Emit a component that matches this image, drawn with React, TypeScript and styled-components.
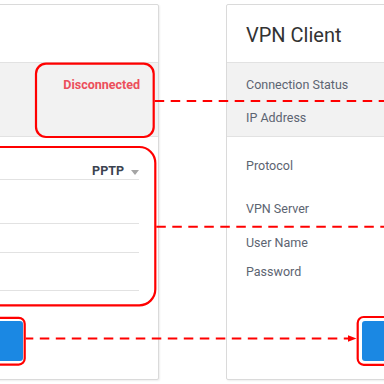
import styled, { createGlobalStyle } from 'styled-components';

const GlobalStyle = createGlobalStyle`
  html, body {
    margin: 0;
    padding: 0;
    background: #ffffff;
  }
  body {
    font-family: Roboto, 'Liberation Sans', sans-serif;
    overflow: hidden;
  }
`;

const App = () => {
  return (
    <>
      <GlobalStyle />
      <Stage>
        {/* mobile-ish card, mostly cut off on the left */}
        <Card $width={230} $offset={-71}>
          <CardHeader />
          <StatusSection>
            <StatusRow $align="flex-end">
              <StatusValue>Disconnected</StatusValue>
            </StatusRow>
            <StatusRow />
          </StatusSection>
          <FormSection>
            <Field $h={29}>
              <Select>
                PPTP
                <Caret />
              </Select>
            </Field>
            <Field $h={44} />
            <Field $h={29} />
            <Field $h={38} />
          </FormSection>
          <Footer $justify="flex-start">
            <Button $w={74} />
          </Footer>
        </Card>

        <Card $width={236}>
          <CardHeader>VPN Client</CardHeader>
          <StatusSection>
            <StatusRow>
              <Label>Connection Status</Label>
            </StatusRow>
            <StatusRow>
              <Label>IP Address</Label>
            </StatusRow>
          </StatusSection>
          <LabelList>
            <LabelRow $top={21}>Protocol</LabelRow>
            <LabelRow $top={27}>VPN Server</LabelRow>
            <LabelRow $top={18}>User Name</LabelRow>
            <LabelRow $top={13}>Password</LabelRow>
          </LabelList>
          <Footer $justify="flex-end">
            <Button $w={80} />
          </Footer>
        </Card>

        <Annotations viewBox="0 0 384 384" width={384} height={384}>
          <rect x={36} y={63.7} width={117.7} height={73.3} rx={10} />
          <rect x={-40} y={147} width={195.3} height={158.3} rx={16} />
          <rect x={-40} y={317.8} width={64.7} height={46.8} rx={6} />
          <rect x={357.7} y={317} width={60} height={47.8} rx={6} />
          <line x1={154.7} y1={101} x2={390} y2={101} />
          <line x1={156.3} y1={226.7} x2={390} y2={226.7} />
          <line
            x1={25.7}
            y1={338.5}
            x2={349}
            y2={338.5}
            strokeDashoffset={1.9}
          />
          <polygon points="348,335.2 356.5,338.5 348,341.8" />
        </Annotations>
      </Stage>
    </>
  );
};

export default App;

const Stage = styled.div`
  position: relative;
  width: 384px;
  height: 384px;
  overflow: hidden;
  box-sizing: border-box;
  padding-top: 4px;
  display: flex;
  align-items: flex-start;
  gap: 67px;
`;

const Card = styled.section<{ $width: number; $offset?: number }>`
  flex-shrink: 0;
  width: ${(props) => props.$width}px;
  margin-left: ${(props) => props.$offset ?? 0}px;
  height: 376px;
  box-sizing: border-box;
  border: 1px solid #dadada;
  border-radius: 2px;
  background: #ffffff;
  box-shadow: 1px 1px 2px rgba(0, 0, 0, 0.07);
  display: flex;
  flex-direction: column;
`;

const CardHeader = styled.div`
  height: 57px;
  box-sizing: border-box;
  padding: 3px 19px 0;
  display: flex;
  align-items: center;
  font-size: 20px;
  color: #333333;
`;

const StatusSection = styled.div`
  height: 75px;
  box-sizing: border-box;
  border-top: 1px solid #e2e2e2;
  border-bottom: 1px solid #e2e2e2;
  background: #f2f2f2;
  padding: 5px 19px 0;
`;

const StatusRow = styled.div<{ $align?: string }>`
  height: 33px;
  display: flex;
  align-items: center;
  justify-content: ${(props) => props.$align ?? 'flex-start'};
`;

const Label = styled.span`
  font-size: 12.5px;
  color: #5c6471;
`;

const StatusValue = styled.span`
  font-size: 12.5px;
  font-weight: 700;
  color: #ec4f5b;
  margin-right: -1px;
`;

const FormSection = styled.div`
  padding: 14px 19px 0;
  display: flex;
  flex-direction: column;
`;

const Field = styled.div<{ $h: number }>`
  height: ${(props) => props.$h}px;
  box-sizing: border-box;
  border-bottom: 1px solid #e2e2e2;
  display: flex;
  align-items: flex-end;
  justify-content: flex-end;
  padding-bottom: 1px;
`;

const Select = styled.div`
  display: flex;
  align-items: center;
  gap: 7px;
  font-size: 12.5px;
  line-height: 14px;
  font-weight: 700;
  color: #3b4350;
`;

const Caret = styled.span`
  width: 0;
  height: 0;
  border-left: 4.5px solid transparent;
  border-right: 4.5px solid transparent;
  border-top: 5px solid #a5a5a5;
  margin-top: 2px;
`;

const LabelList = styled.div`
  padding: 0 19px;
  display: flex;
  flex-direction: column;
`;

const LabelRow = styled.div<{ $top: number }>`
  margin-top: ${(props) => props.$top}px;
  line-height: 16px;
  font-size: 12.5px;
  color: #5c6471;
`;

const Footer = styled.div<{ $justify: string }>`
  margin-top: auto;
  padding: 0 19px 18px;
  display: flex;
  justify-content: ${(props) => props.$justify};
`;

const Button = styled.button<{ $w: number }>`
  width: ${(props) => props.$w}px;
  height: 40px;
  border: none;
  border-radius: 3px;
  background: #1b88e3;
`;

const Annotations = styled.svg`
  position: absolute;
  left: 0;
  top: 0;
  pointer-events: none;
  fill: none;
  stroke: #ff0000;
  stroke-width: 2.2px;

  line {
    stroke-width: 2px;
    stroke-dasharray: 9.5 6.5;
  }

  polygon {
    fill: #ff0000;
    stroke: none;
  }
`;
